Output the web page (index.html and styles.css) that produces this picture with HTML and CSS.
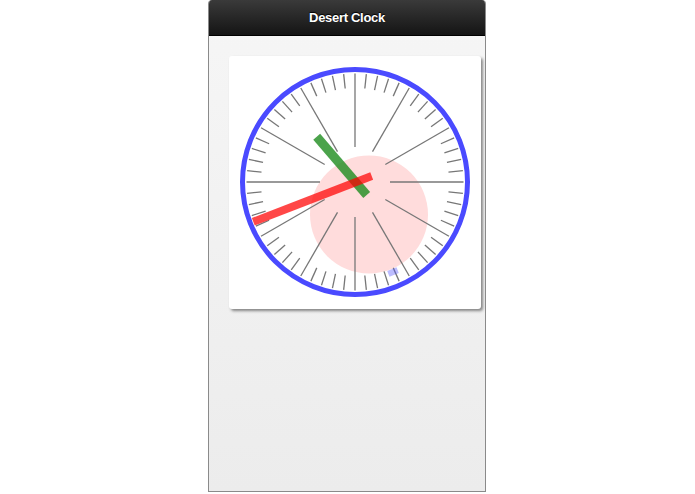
FILE: index.html
```html
<!DOCTYPE html>
<html>
<head>
<meta charset="utf-8">
<link rel="stylesheet" href="styles.css">
</head>
<body>
<div class="phone">
  <div class="header"><h1 class="title">Desert Clock</h1></div>
  <div class="content">
    <div class="card">
      <svg class="clock" width="252" height="252" viewBox="0 0 252 252" xmlns="http://www.w3.org/2000/svg">
        <circle cx="140" cy="158.5" r="59" fill="#ffdcdc"/>
        <g id="ticks" stroke="#777" stroke-width="1.3"></g>
        <circle cx="126" cy="126" r="112.5" fill="none" stroke="#4a4aff" stroke-width="5"/>
        <line x1="87.7" y1="80.7" x2="137.7" y2="139" stroke="rgb(30,140,30)" stroke-opacity="0.8" stroke-width="9"/>
        <line x1="24.3" y1="165.7" x2="142.7" y2="120" stroke="rgb(255,0,0)" stroke-opacity="0.72" stroke-width="8"/>
        <rect x="159" y="213" width="10" height="6" fill="#5a5aff" fill-opacity="0.4" transform="rotate(-22 164 216)"/>
      </svg>
    </div>
  </div>
</div>
<script>
  var g = document.getElementById('ticks');
  var ns = 'http://www.w3.org/2000/svg';
  for (var i = 0; i < 60; i++) {
    var a = i * Math.PI / 30;
    var r1 = (i % 5 === 0) ? 35 : 94;
    var r2 = 108.5;
    var l = document.createElementNS(ns, 'line');
    l.setAttribute('x1', 126 + Math.sin(a) * r1);
    l.setAttribute('y1', 126 - Math.cos(a) * r1);
    l.setAttribute('x2', 126 + Math.sin(a) * r2);
    l.setAttribute('y2', 126 - Math.cos(a) * r2);
    g.appendChild(l);
  }
</script>
</body>
</html>
```
FILE: styles.css
```css
html, body {
  margin: 0;
  padding: 0;
  background: #ffffff;
  font-family: "Liberation Sans", Arial, sans-serif;
}
.phone {
  margin-left: 208px;
  width: 276px;
  height: 491px;
  border: 1px solid #8a8a8a;
  border-top: none;
  border-radius: 4px 4px 0 0;
  overflow: hidden;
  background: linear-gradient(#f6f6f6, #ececec);
}
.header {
  height: 35px;
  background: linear-gradient(#3a3a3a, #141414);
  border-bottom: 1px solid #000;
  display: flex;
  align-items: center;
  justify-content: center;
}
.title {
  margin: 0;
  color: #fff;
  font-size: 13px;
  font-weight: bold;
  letter-spacing: -0.3px;
  text-shadow: 0 -1px 1px #000;
}
.content {
  padding: 20px 0 0 20px;
}
.card {
  width: 252px;
  height: 253px;
  background: #fff;
  border-radius: 3px;
  box-shadow: 2px 2px 3px rgba(0, 0, 0, 0.45);
}
.clock {
  display: block;
}
```
